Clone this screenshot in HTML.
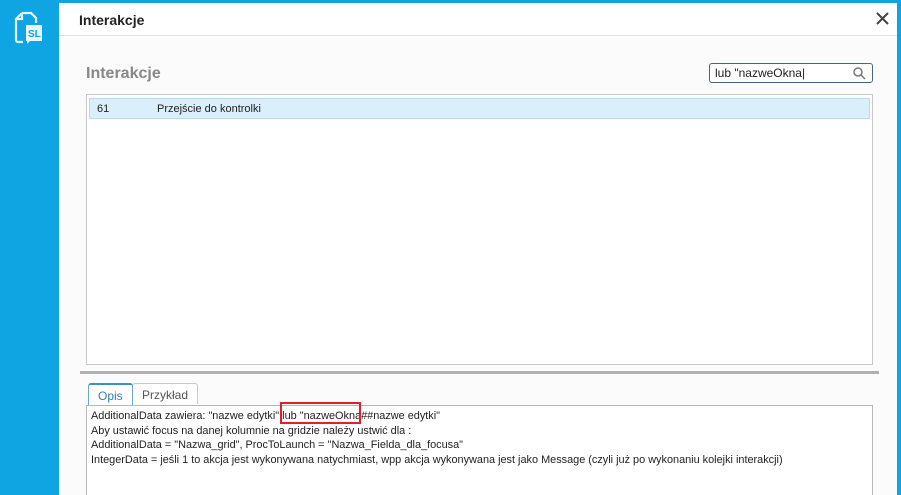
<!DOCTYPE html>
<html><head><meta charset="utf-8"><style>
*{margin:0;padding:0;box-sizing:border-box}
html,body{width:901px;height:495px;overflow:hidden}
body{background:#0ea5e2;font-family:"Liberation Sans",sans-serif;position:relative}
.dlg{position:absolute;left:59px;top:3px;width:838px;height:492px;background:#fff;overflow:hidden}
.hdr{position:absolute;left:0;top:0;width:838px;height:33px;border-bottom:1px solid #e2e2e2;background:#fff}
.hdr .t{position:absolute;left:20px;top:9px;font-size:14px;font-weight:bold;color:#222}
.x{position:absolute;right:7px;top:8px}
.body{position:absolute;left:0;top:34px;width:838px;height:458px;background:#fbfbfb}
.h2{position:absolute;left:27px;top:28px;font-size:16px;font-weight:bold;color:#888}
.srch{position:absolute;left:650px;top:26px;width:164px;height:20px;border:1px solid #4a6478;border-radius:3px;background:#fff;font-size:12px;padding:2px 0 0 5px;color:#222}
.list{position:absolute;left:27px;top:57px;width:787px;height:271px;border:1px solid #c8c8c8;background:#fff}
.row{position:absolute;left:2px;top:3px;width:781px;height:21px;background:#d9eff9;border:1px solid #b8dcee;font-size:11px;color:#222}
.split{position:absolute;left:21px;top:334px;width:799px;height:3px;background:#b0b0b0}
.tab{position:absolute;top:346px;height:21px;font-size:12px;padding:4px 9px;border:1px solid #c8c8c8;border-bottom:none;border-radius:3px 3px 0 0;color:#555;background:#fff}
.ta{position:absolute;left:27px;top:368px;width:787px;height:95px;border:1px solid #b8b8b8;border-bottom:none;background:#fff;font-size:10.9px;line-height:14.5px;color:#222;padding:3px 0 0 4px;white-space:pre}
</style></head><body>
<svg style="position:absolute;left:13px;top:11px" width="32" height="36" viewBox="0 0 32 36" fill="none" stroke="#e8f6fd" stroke-width="2.2">
<path d="M9 2h9l5 5v5M9 2L3 8v21a2 2 0 0 0 2 2h5M3 8h6V2"/>
<rect x="13" y="14" width="16" height="16" fill="#e8f6fd" stroke="none"/>
<path d="M14 30v3l3-3z" fill="#e8f6fd" stroke="none"/>
<text x="15" y="26" font-size="10" fill="#0ea5e2" stroke="none" font-family="Liberation Sans" font-weight="bold">SL</text>
</svg>
<div class="dlg">
<div class="hdr"><div class="t">Interakcje</div>
<svg class="x" width="15" height="15" viewBox="0 0 15 15" stroke="#444" stroke-width="2"><path d="M2 2L13 13M13 2L2 13"/></svg></div>
<div class="body">
<div class="h2">Interakcje</div>
<div class="srch">lub "nazweOkna|
<svg style="position:absolute;right:6px;top:3px" width="13" height="13" viewBox="0 0 13 13" fill="none" stroke="#777" stroke-width="1.5"><circle cx="5" cy="5" r="4"/><path d="M8 8l4 4"/></svg></div>
<div class="list"><div class="row"><span style="position:absolute;left:7px;top:4px">61</span><span style="position:absolute;left:67px;top:4px">Przejście do kontrolki</span></div></div>
<div class="split"></div>
<div class="tab" style="left:29px;color:#2a7fb8;border-color:#6aa8d0;border-top:2px solid #3a8fc8;height:22px;z-index:2">Opis</div>
<div class="tab" style="left:73px">Przykład</div>
<div style="position:absolute;left:777px;top:368px;width:4px;height:4px;background:#e0202a"></div>
<div class="ta">AdditionalData zawiera: "nazwe edytki" lub "nazweOkna##nazwe edytki"
Aby ustawić focus na danej kolumnie na gridzie należy ustwić dla :
AdditionalData = "Nazwa_grid", ProcToLaunch = "Nazwa_Fielda_dla_focusa"
IntegerData = jeśli 1 to akcja jest wykonywana natychmiast, wpp akcja wykonywana jest jako Message (czyli już po wykonaniu kolejki interakcji)</div>
<div style="position:absolute;left:221px;top:365px;width:81px;height:22px;border:2px solid #e0202a"></div>
</div></div>
</body></html>
